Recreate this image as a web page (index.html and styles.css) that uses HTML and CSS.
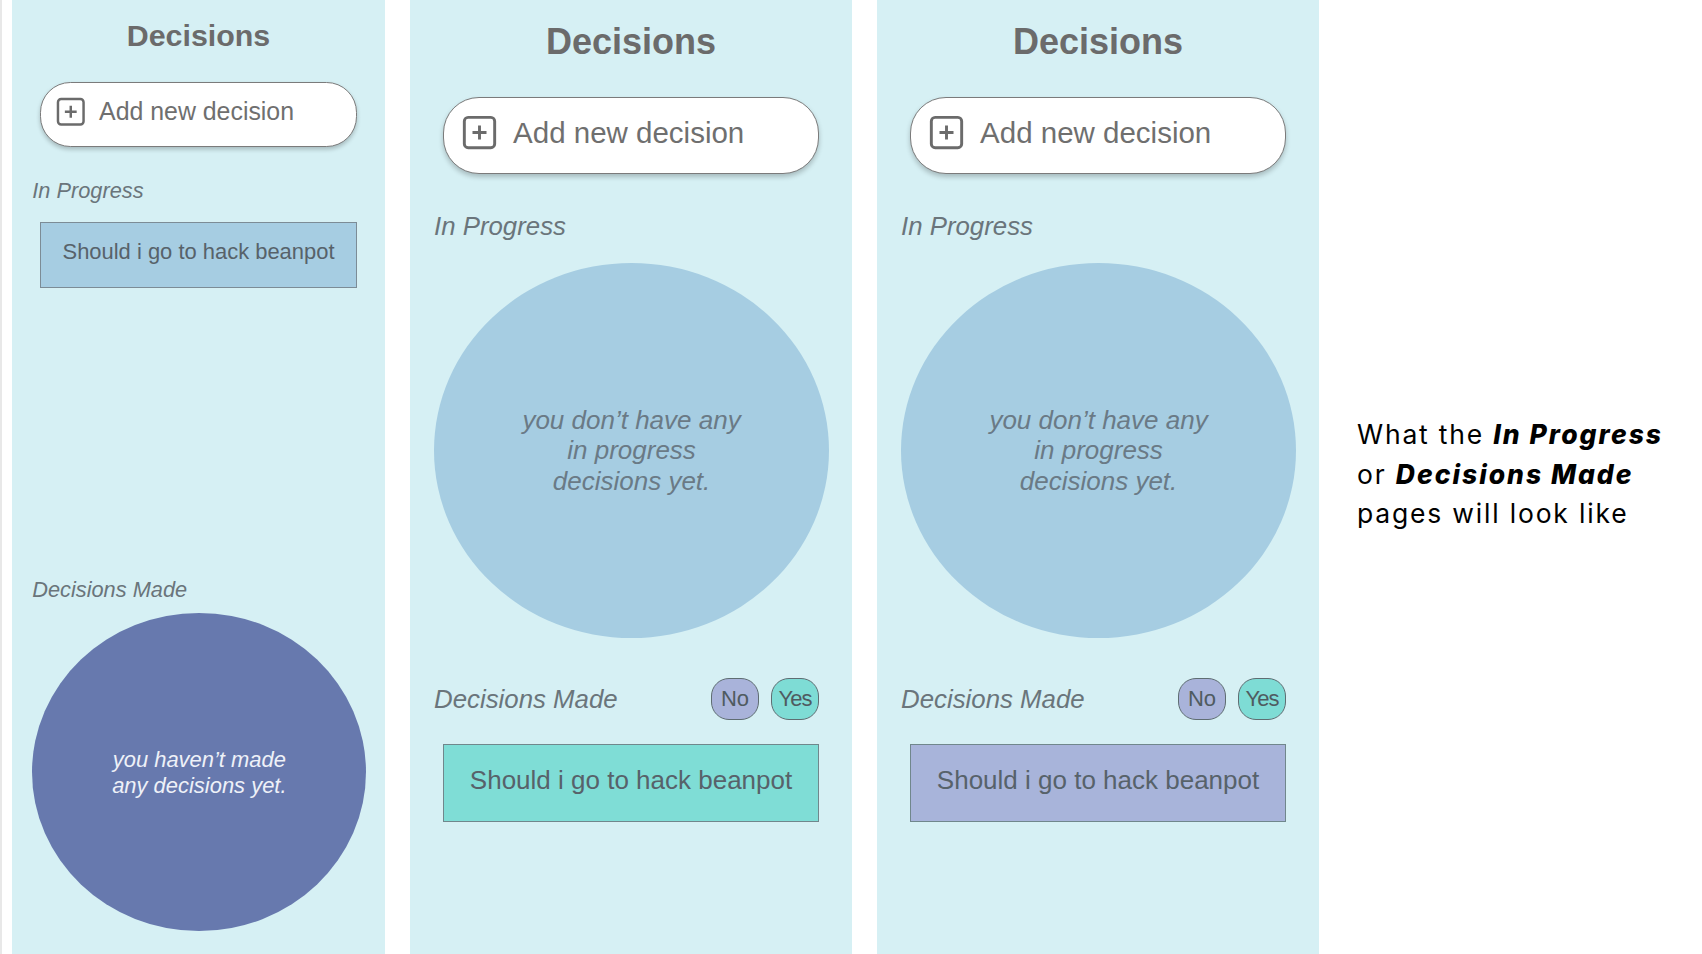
FILE: index.html
```html
<!DOCTYPE html>
<html lang="en">
<head>
<meta charset="utf-8">
<title>Decisions</title>
<link rel="stylesheet" href="styles.css">
</head>
<body>
<div class="page">
  <section class="panel panel-small">
    <h1 class="title">Decisions</h1>
    <button class="add-btn" type="button">
      <svg class="plus-icon" viewBox="0 0 24 24"><rect x="1.6" y="1.6" width="20.8" height="20.8" rx="2.6"/><path d="M12 7.2v9.6M7.2 12h9.6"/></svg>
      <span>Add new decision</span>
    </button>
    <div class="group in-progress">
      <h2 class="label">In Progress</h2>
      <div class="card card-blue">Should i go to hack beanpot</div>
    </div>
    <div class="group">
      <div class="group-head"><h2 class="label">Decisions Made</h2></div>
      <div class="bubble bubble-dark">you haven’t made<br>any decisions yet.</div>
    </div>
  </section>

  <section class="panel">
    <h1 class="title">Decisions</h1>
    <button class="add-btn" type="button">
      <svg class="plus-icon" viewBox="0 0 24 24"><rect x="1.6" y="1.6" width="20.8" height="20.8" rx="2.6"/><path d="M12 7.2v9.6M7.2 12h9.6"/></svg>
      <span>Add new decision</span>
    </button>
    <div class="group in-progress">
      <h2 class="label">In Progress</h2>
      <div class="bubble bubble-light">you don’t have any<br>in progress<br>decisions yet.</div>
    </div>
    <div class="group">
      <div class="group-head">
        <h2 class="label">Decisions Made</h2>
        <div class="choices"><span class="chip chip-no">No</span><span class="chip chip-yes">Yes</span></div>
      </div>
      <div class="card card-teal">Should i go to hack beanpot</div>
    </div>
  </section>

  <section class="panel">
    <h1 class="title">Decisions</h1>
    <button class="add-btn" type="button">
      <svg class="plus-icon" viewBox="0 0 24 24"><rect x="1.6" y="1.6" width="20.8" height="20.8" rx="2.6"/><path d="M12 7.2v9.6M7.2 12h9.6"/></svg>
      <span>Add new decision</span>
    </button>
    <div class="group in-progress">
      <h2 class="label">In Progress</h2>
      <div class="bubble bubble-light">you don’t have any<br>in progress<br>decisions yet.</div>
    </div>
    <div class="group">
      <div class="group-head">
        <h2 class="label">Decisions Made</h2>
        <div class="choices"><span class="chip chip-no">No</span><span class="chip chip-yes">Yes</span></div>
      </div>
      <div class="card card-lavender">Should i go to hack beanpot</div>
    </div>
  </section>

  <p class="caption">What the <em>In Progress</em><br>or <em>Decisions Made</em><br>pages will look like</p>
</div>
</body>
</html>
```

FILE: styles.css
```css
* { box-sizing: border-box; }

html, body {
  margin: 0;
  padding: 0;
  background: #ffffff;
}

body {
  font-family: "Liberation Sans", Arial, sans-serif;
}

.page {
  display: flex;
  height: 954px;
  gap: 25px;
  padding-left: 10px;
  border-left: 2px solid #e8e8e8;
  overflow: hidden;
}

/* --u is the unit of one panel; the first panel is a smaller copy */
.panel {
  --u: 1px;
  flex: none;
  width: calc(442 * var(--u));
  background: #d6f0f4;
  padding-top: calc(21 * var(--u));
  display: flex;
  flex-direction: column;
}

.panel-small {
  --u: 0.844px;
}

.title {
  margin: 0;
  text-align: center;
  font-size: calc(36 * var(--u));
  line-height: calc(42 * var(--u));
  font-weight: 700;
  color: #6b6b6b;
}

.add-btn {
  margin: calc(34 * var(--u)) 0 0 calc(33 * var(--u));
  width: calc(376 * var(--u));
  height: calc(77 * var(--u));
  border: 1px solid #7b7b7b;
  border-radius: calc(36 * var(--u));
  background: #ffffff;
  box-shadow: 0 calc(3 * var(--u)) calc(5 * var(--u)) rgba(0, 0, 0, 0.22);
  display: flex;
  align-items: center;
  gap: calc(16 * var(--u));
  padding: 0 0 calc(6 * var(--u)) calc(18 * var(--u));
  font-family: "Liberation Sans", Arial, sans-serif;
  font-size: calc(29.5 * var(--u));
  line-height: calc(34 * var(--u));
  color: #6f6f6f;
  cursor: pointer;
}

.plus-icon {
  flex: none;
  width: calc(35 * var(--u));
  height: calc(35 * var(--u));
  fill: none;
  stroke: #6b6b6b;
  stroke-width: 2;
}

.group {
  display: flex;
  flex-direction: column;
}

.in-progress {
  margin-top: calc(37 * var(--u));
  height: calc(467 * var(--u));
}

.label {
  margin: 0 0 0 calc(24 * var(--u));
  font-size: calc(25.8 * var(--u));
  line-height: calc(30 * var(--u));
  font-style: italic;
  font-weight: 400;
  color: #6a757b;
}

.group-head {
  display: flex;
  align-items: center;
  height: calc(42 * var(--u));
  padding-right: calc(33 * var(--u));
}

.choices {
  margin-left: auto;
  display: flex;
  gap: calc(12 * var(--u));
}

.chip {
  width: calc(48 * var(--u));
  height: calc(42 * var(--u));
  border: 1px solid #5f6d72;
  border-radius: calc(18 * var(--u));
  display: flex;
  align-items: center;
  justify-content: center;
  font-size: calc(22 * var(--u));
  color: #4f5b61;
}

.chip-no { background: #a9b3da; }
.chip-yes { background: #7edcd5; letter-spacing: -1px; }

.card {
  margin: calc(24 * var(--u)) 0 0 calc(33 * var(--u));
  width: calc(376 * var(--u));
  height: calc(78 * var(--u));
  border: 1px solid #70878c;
  display: flex;
  align-items: center;
  justify-content: center;
  padding-bottom: calc(6 * var(--u));
  font-size: calc(26 * var(--u));
  color: #57626a;
}

.in-progress .card { margin-top: calc(22 * var(--u)); }

.card-blue { background: #a6cde2; border-color: #7c8c96; }
.card-teal { background: #7fddd6; }
.card-lavender { background: #a8b4da; }

.bubble {
  margin: calc(22 * var(--u)) 0 0 calc(24 * var(--u));
  width: calc(395 * var(--u));
  height: calc(375 * var(--u));
  border-radius: 50%;
  display: flex;
  align-items: center;
  justify-content: center;
  text-align: center;
  font-size: calc(26 * var(--u));
  line-height: calc(30.5 * var(--u));
  font-style: italic;
}

.bubble-light {
  background: #a6cde2;
  color: #6a7a86;
}

.bubble-dark {
  margin-top: calc(6 * var(--u));
  width: calc(396 * var(--u));
  height: calc(377 * var(--u));
  padding-top: calc(2 * var(--u));
  background: #6779ae;
  color: #eef1f8;
}

.caption {
  flex: none;
  align-self: flex-start;
  margin: 415px 0 0 13px;
  font-family: Inter, "Open Sans", sans-serif;
  font-size: 26.5px;
  line-height: 39.5px;
  letter-spacing: 1.8px;
  color: #000000;
}

.caption em {
  font-style: italic;
  font-weight: 800;
  letter-spacing: 2px;
}
```
